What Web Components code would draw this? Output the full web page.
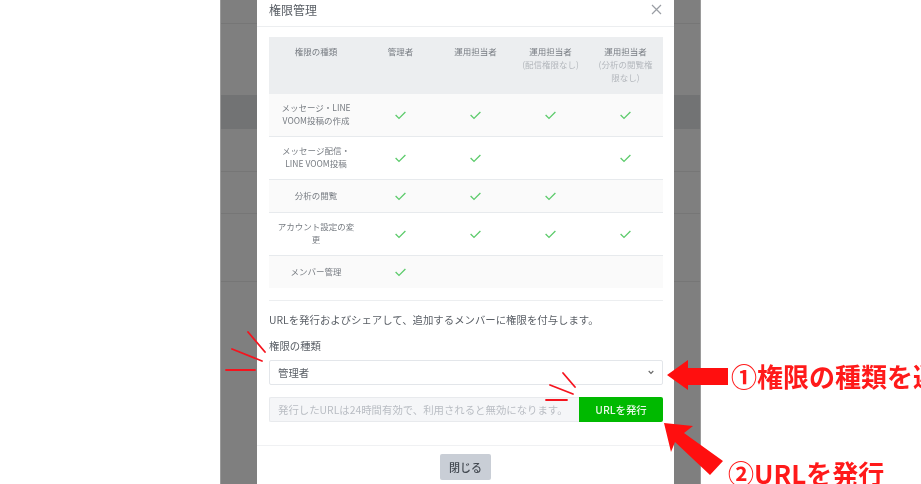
<!DOCTYPE html>
<html lang="ja">
<head>
<meta charset="utf-8">
<title>権限管理</title>
<style>
  html, body { margin:0; background:#fff; overflow:hidden; }
  body { width:921px; height:484px; font-family:"Noto Sans CJK JP", "Noto Sans", sans-serif; }
</style>
</head>
<body>
<shot-page>
  <dim-backdrop slot="back"></dim-backdrop>
  <perm-modal slot="modal" heading="権限管理">
    <perm-table>
      <perm-row slot="rows" checks="1111">メッセージ・LINE<br>VOOM投稿の作成</perm-row>
      <perm-row slot="rows" checks="1101">メッセージ配信・<br>LINE VOOM投稿</perm-row>
      <perm-row slot="rows" checks="1110">分析の閲覧</perm-row>
      <perm-row slot="rows" checks="1111">アカウント設定の変<br>更</perm-row>
      <perm-row slot="rows" checks="1000">メンバー管理</perm-row>
    </perm-table>
    <invite-form></invite-form>
  </perm-modal>
  <note-overlay slot="notes"></note-overlay>
</shot-page>

<script>
const FONT = `"Noto Sans CJK JP", "Noto Sans", sans-serif`;

class ShotPage extends HTMLElement {
  constructor() {
    super();
    this.attachShadow({ mode: "open" }).innerHTML = `
      <style>
        :host { display:block; position:relative; width:921px; height:484px; overflow:hidden; background:#fff; font-family:${FONT}; }
        .back { display:block; width:481px; height:484px; margin-left:220px; }
        .modal { position:absolute; left:257px; top:0; width:417px; height:484px; filter:blur(.45px); }
      </style>
      <div class="back"><slot name="back"></slot></div>
      <div class="modal"><slot name="modal"></slot></div>
      <slot name="notes"></slot>
    `;
  }
}

// 暗くなった背景ページの帯と罫線
class DimBackdrop extends HTMLElement {
  constructor() {
    super();
    this.attachShadow({ mode: "open" }).innerHTML = `
      <style>
        :host { display:flex; flex-direction:column; height:484px; background:#7f7f7f; box-shadow:inset 1px 0 #9a9a9a, inset -1px 0 #9a9a9a; }
        div { box-sizing:border-box; border-bottom:1px solid #767676; margin:0 1px; }
        .band { background:#727374; border-bottom:0; }
      </style>
      <div style="height:24px"></div>
      <div style="height:71px;border-bottom:0"></div>
      <div class="band" style="height:34px"></div>
      <div style="height:43px"></div>
      <div style="height:42px"></div>
      <div style="height:68px"></div>
    `;
  }
}

class PermModal extends HTMLElement {
  constructor() {
    super();
    this.attachShadow({ mode: "open" }).innerHTML = `
      <style>
        :host { display:flex; flex-direction:column; height:484px; background:#fff; color:#555; }
        header { box-sizing:border-box; height:27px; padding:0 12px; display:flex; justify-content:space-between; align-items:center; border-bottom:1px solid #eceef0; }
        h2 { margin:0 0 7px; font-size:12px; line-height:20px; font-weight:400; color:#5a5f66; }
        svg { display:block; margin-bottom:7px; }
        .body { padding:10px 12px 0; flex:1; }
        footer { box-sizing:border-box; height:39px; border-top:1px solid #f0f1f3; display:flex; justify-content:center; padding-top:8px; }
        button { box-sizing:border-box; width:51px; height:26px; border:0; border-radius:2px; background:#c9ced6; color:#444a52; font:500 11px/26px ${FONT}; padding:0; }
      </style>
      <header>
        <h2 id="h"></h2>
        <svg width="11" height="11" viewBox="0 0 11 11" fill="none" stroke="#9a9ea4" stroke-width="1.2"><path d="M1 1l9 9M10 1l-9 9"/></svg>
      </header>
      <div class="body"><slot></slot></div>
      <footer><button type="button">閉じる</button></footer>
    `;
    this.shadowRoot.getElementById("h").textContent = this.getAttribute("heading");
  }
}

class PermTable extends HTMLElement {
  constructor() {
    super();
    this.attachShadow({ mode: "open" }).innerHTML = `
      <style>
        :host { display:block; width:394px; font-size:8.5px; line-height:13px; padding-bottom:12px; border-bottom:1px solid #eceef0; }
        .head { display:grid; grid-template-columns:94px repeat(4,75px); height:57px; box-sizing:border-box; background:#eceef0; padding-top:8px; text-align:center; color:#777c82; }
        small { display:block; font-size:8.5px; color:#b4b8bd; }
      </style>
      <div class="head">
        <span>権限の種類</span>
        <span>管理者</span>
        <span>運用担当者</span>
        <span>運用担当者<small>(配信権限なし)</small></span>
        <span>運用担当者<small>(分析の閲覧権<br>限なし)</small></span>
      </div>
      <slot name="rows"></slot>
    `;
  }
}

class PermRow extends HTMLElement {
  constructor() {
    super();
    const checks = (this.getAttribute("checks") || "").split("");
    const icon = `<svg width="11" height="9" viewBox="0 0 11 9" fill="none" stroke="#5ccb6b" stroke-width="1.3"><path d="M.6 4l3.4 3.4L10.4 1"/></svg>`;
    this.attachShadow({ mode: "open" }).innerHTML = `
      <style>
        :host { display:grid; grid-template-columns:94px repeat(4,75px); align-items:center; box-sizing:border-box; min-height:33px; padding:9px 0; border-bottom:1px solid #e7eaed; color:#777c82; }
        :host(:nth-child(odd)) { background:#fafafa; }
        :host(:last-child) { border-bottom:0; min-height:32px; }
        .name { text-align:center; margin-top:-2px; }
        .c { display:flex; justify-content:center; margin-top:1px; }
      </style>
      <div class="name"><slot></slot></div>
      ${checks.map(v => `<div class="c">${v === "1" ? icon : ""}</div>`).join("")}
    `;
  }
}

class InviteForm extends HTMLElement {
  constructor() {
    super();
    this.attachShadow({ mode: "open" }).innerHTML = `
      <style>
        :host { display:block; width:394px; font-size:10.4px; color:#5a5f66; padding-top:11px; }
        p { margin:0; line-height:16px; white-space:nowrap; }
        label { display:block; margin-top:10px; line-height:16px; }
        .select { box-sizing:border-box; margin-top:6px; height:25px; border:1px solid #e3e6ea; border-radius:2px; padding:0 8px; display:flex; align-items:center; justify-content:space-between; color:#5a5f66; }
        .row { display:flex; margin-top:12px; height:25px; }
        .input { box-sizing:border-box; flex:1; background:#f5f6f8; border:1px solid #e8eaed; border-right:0; border-radius:2px 0 0 2px; padding:0 8px; line-height:23px; color:#b9bdc3; white-space:nowrap; overflow:hidden; }
        button { box-sizing:border-box; width:84px; border:0; border-radius:0 2px 2px 0; background:#00b900; color:#e8f8e8; font:500 10.4px/25px ${FONT}; padding:0; }
      </style>
      <p>URLを発行およびシェアして、追加するメンバーに権限を付与します。</p>
      <label>権限の種類</label>
      <div class="select"><span>管理者</span>
        <svg width="6" height="5" viewBox="0 0 6 5" fill="none" stroke="#666" stroke-width="1.1"><path d="M.7 1l2.3 2.4L5.3 1"/></svg>
      </div>
      <div class="row">
        <div class="input">発行したURLは24時間有効で、利用されると無効になります。</div>
        <button type="button">URLを発行</button>
      </div>
    `;
  }
}

// 赤い手書きの注釈(矢印・強調線・説明文)
class NoteOverlay extends HTMLElement {
  constructor() {
    super();
    this.attachShadow({ mode: "open" }).innerHTML = `
      <style>
        :host { display:block; position:absolute; inset:0; pointer-events:none; }
        svg { position:absolute; left:0; top:0; filter:blur(.3px); }
        span { position:absolute; font:700 26px/23px ${FONT}; color:#ff1a1a; white-space:nowrap; filter:blur(.3px); }
      </style>
      <svg width="921" height="484" viewBox="0 0 921 484">
        <g stroke="#f5141e" stroke-width="1.8" stroke-linecap="round" fill="none">
          <path d="M248 332L265 352M232 349L262 361M226 370L255 370"/>
          <path d="M563 373L575 387M550 385L573 394M546 400L567 400"/>
        </g>
        <g fill="#ff0f0f">
          <path d="M667 375L688 360V368H728V385H688V390Z"/>
          <path d="M664 423L693 426L684 433L723 461L710 475L675 442L671 452Z"/>
        </g>
      </svg>
      <span style="left:731px;top:364px">①権限の種類を選</span>
      <span style="left:728px;top:461px">②URLを発行</span>
    `;
  }
}

customElements.define("shot-page", ShotPage);
customElements.define("dim-backdrop", DimBackdrop);
customElements.define("perm-modal", PermModal);
customElements.define("perm-table", PermTable);
customElements.define("perm-row", PermRow);
customElements.define("invite-form", InviteForm);
customElements.define("note-overlay", NoteOverlay);
</script>
</body>
</html>
